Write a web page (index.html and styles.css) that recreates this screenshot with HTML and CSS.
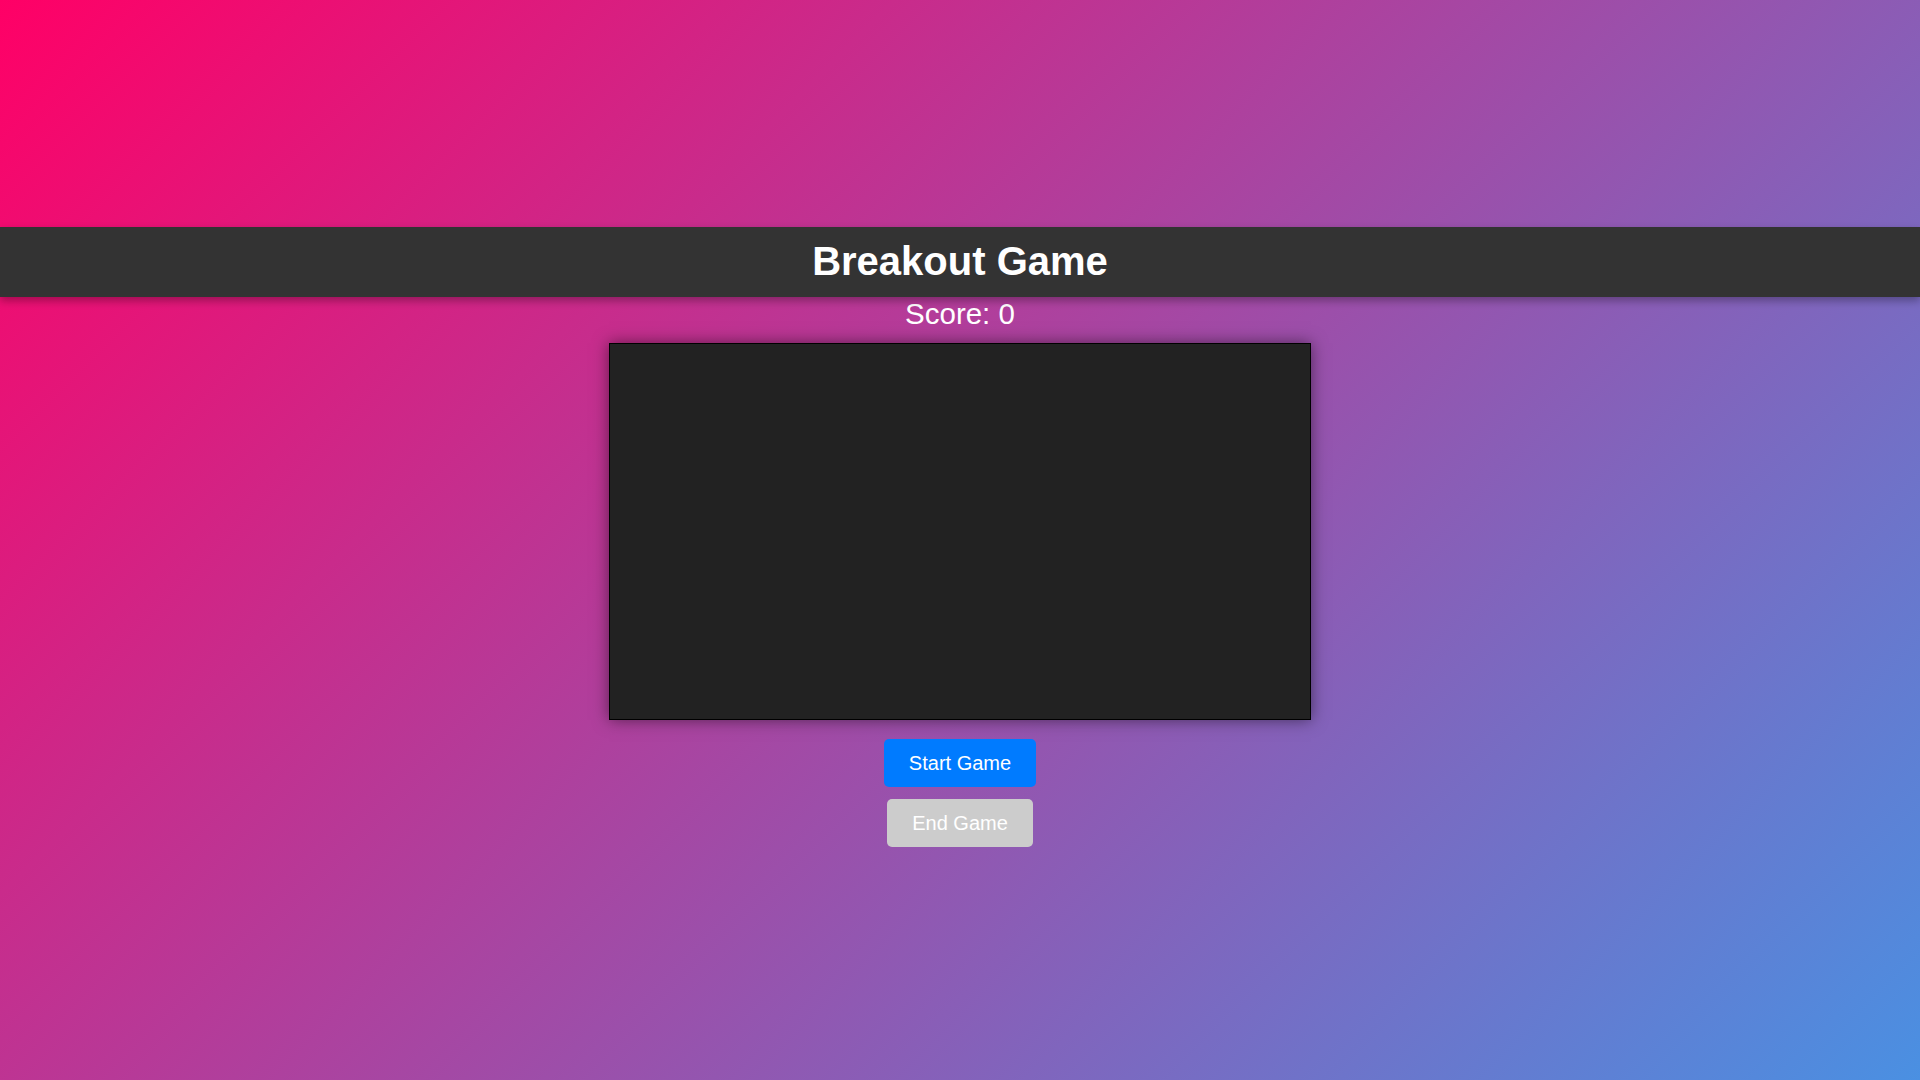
FILE: index.html
```html
<!DOCTYPE html>
<html lang="en">
<head>
<meta charset="utf-8">
<title>Breakout Game</title>
<link rel="stylesheet" href="styles.css">
</head>
<body>
<div class="page">
  <header class="topbar">
    <h1 class="title">Breakout Game</h1>
  </header>
  <div class="score">Score: <span>0</span></div>
  <div class="board"></div>
  <div class="controls">
    <button class="btn btn-start">Start Game</button>
    <button class="btn btn-end">End Game</button>
  </div>
</div>
</body>
</html>
```
FILE: styles.css
```css
html, body {
  margin: 0;
  padding: 0;
}
body {
  min-height: 100vh;
  background: linear-gradient(135deg, #ff0066, #4a90e2);
  font-family: "Liberation Sans", Arial, sans-serif;
  color: #fff;
}
.page {
  padding-top: 227px;
}
.topbar {
  background: #333;
  padding: 11px 0 13px;
  text-align: center;
  box-shadow: 0 4px 8px rgba(0, 0, 0, 0.3);
  position: relative;
}
.title {
  margin: 0;
  font-size: 40px;
  font-weight: bold;
  line-height: 46px;
  color: #fff;
}
.score {
  text-align: center;
  font-size: 29.5px;
  line-height: 34px;
}
.board {
  width: 700px;
  height: 375px;
  margin: 12px auto 0;
  background: #222;
  border: 1px solid #000;
  box-shadow: 0 0 15px rgba(0, 0, 0, 0.5);
}
.controls {
  margin-top: 19px;
  display: flex;
  flex-direction: column;
  align-items: center;
  gap: 12px;
}
.btn {
  font-family: "Liberation Sans", Arial, sans-serif;
  font-size: 20px;
  line-height: 24px;
  padding: 12px 25px;
  border: none;
  border-radius: 5px;
  color: #fff;
  cursor: pointer;
}
.btn-start {
  background: #007bff;
}
.btn-end {
  background: #ccc;
}
```
